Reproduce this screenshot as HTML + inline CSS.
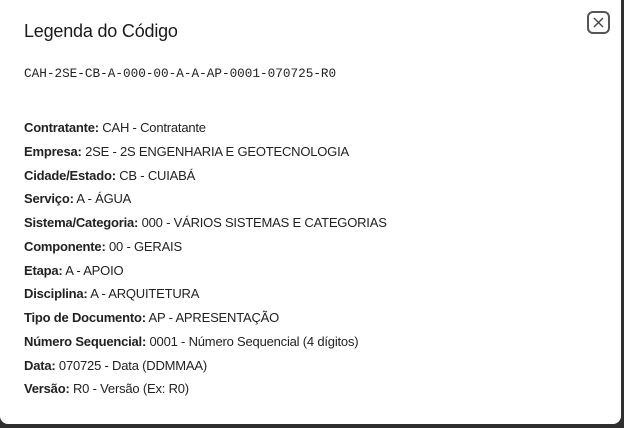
<!DOCTYPE html>
<html><head><meta charset="utf-8"><style>
html,body{margin:0;padding:0;width:624px;height:428px;overflow:hidden;background:#2f2f2f;}
.dlg{position:absolute;left:0;top:0;width:621px;height:424px;background:#fff;border-radius:0 0 8px 8px;font-family:"Liberation Sans",sans-serif;color:#222;}
h1{position:absolute;left:24px;top:21px;margin:0;font-size:18px;font-weight:normal;color:#1a1a1a;letter-spacing:-0.2px;}
.code{position:absolute;left:24px;top:66px;font-family:"Liberation Mono",monospace;font-size:12.7px;color:#222;}
.rows{position:absolute;left:24px;top:116px;font-size:13px;line-height:23.75px;letter-spacing:-0.2px;}
.rows b{font-weight:bold;color:#222;}
.close{position:absolute;left:587px;top:11px;width:19px;height:19px;border:2px solid #555;border-radius:6px;}
</style></head><body>
<div class="dlg">
<h1>Legenda do Código</h1>
<div class="close"><svg width="19" height="19" viewBox="0 0 19 19"><path d="M5 5L14 14M14 5L5 14" stroke="#444" stroke-width="1.4"/></svg></div>
<div class="code">CAH-2SE-CB-A-000-00-A-A-AP-0001-070725-R0</div>
<div class="rows">
<div><b>Contratante:</b> CAH - Contratante</div>
<div><b>Empresa:</b> 2SE - 2S ENGENHARIA E GEOTECNOLOGIA</div>
<div><b>Cidade/Estado:</b> CB - CUIABÁ</div>
<div><b>Serviço:</b> A - ÁGUA</div>
<div><b>Sistema/Categoria:</b> 000 - VÁRIOS SISTEMAS E CATEGORIAS</div>
<div><b>Componente:</b> 00 - GERAIS</div>
<div><b>Etapa:</b> A - APOIO</div>
<div><b>Disciplina:</b> A - ARQUITETURA</div>
<div><b>Tipo de Documento:</b> AP - APRESENTAÇÃO</div>
<div><b>Número Sequencial:</b> 0001 - Número Sequencial (4 dígitos)</div>
<div><b>Data:</b> 070725 - Data (DDMMAA)</div>
<div><b>Versão:</b> R0 - Versão (Ex: R0)</div>
</div>
</div>
</body></html>
